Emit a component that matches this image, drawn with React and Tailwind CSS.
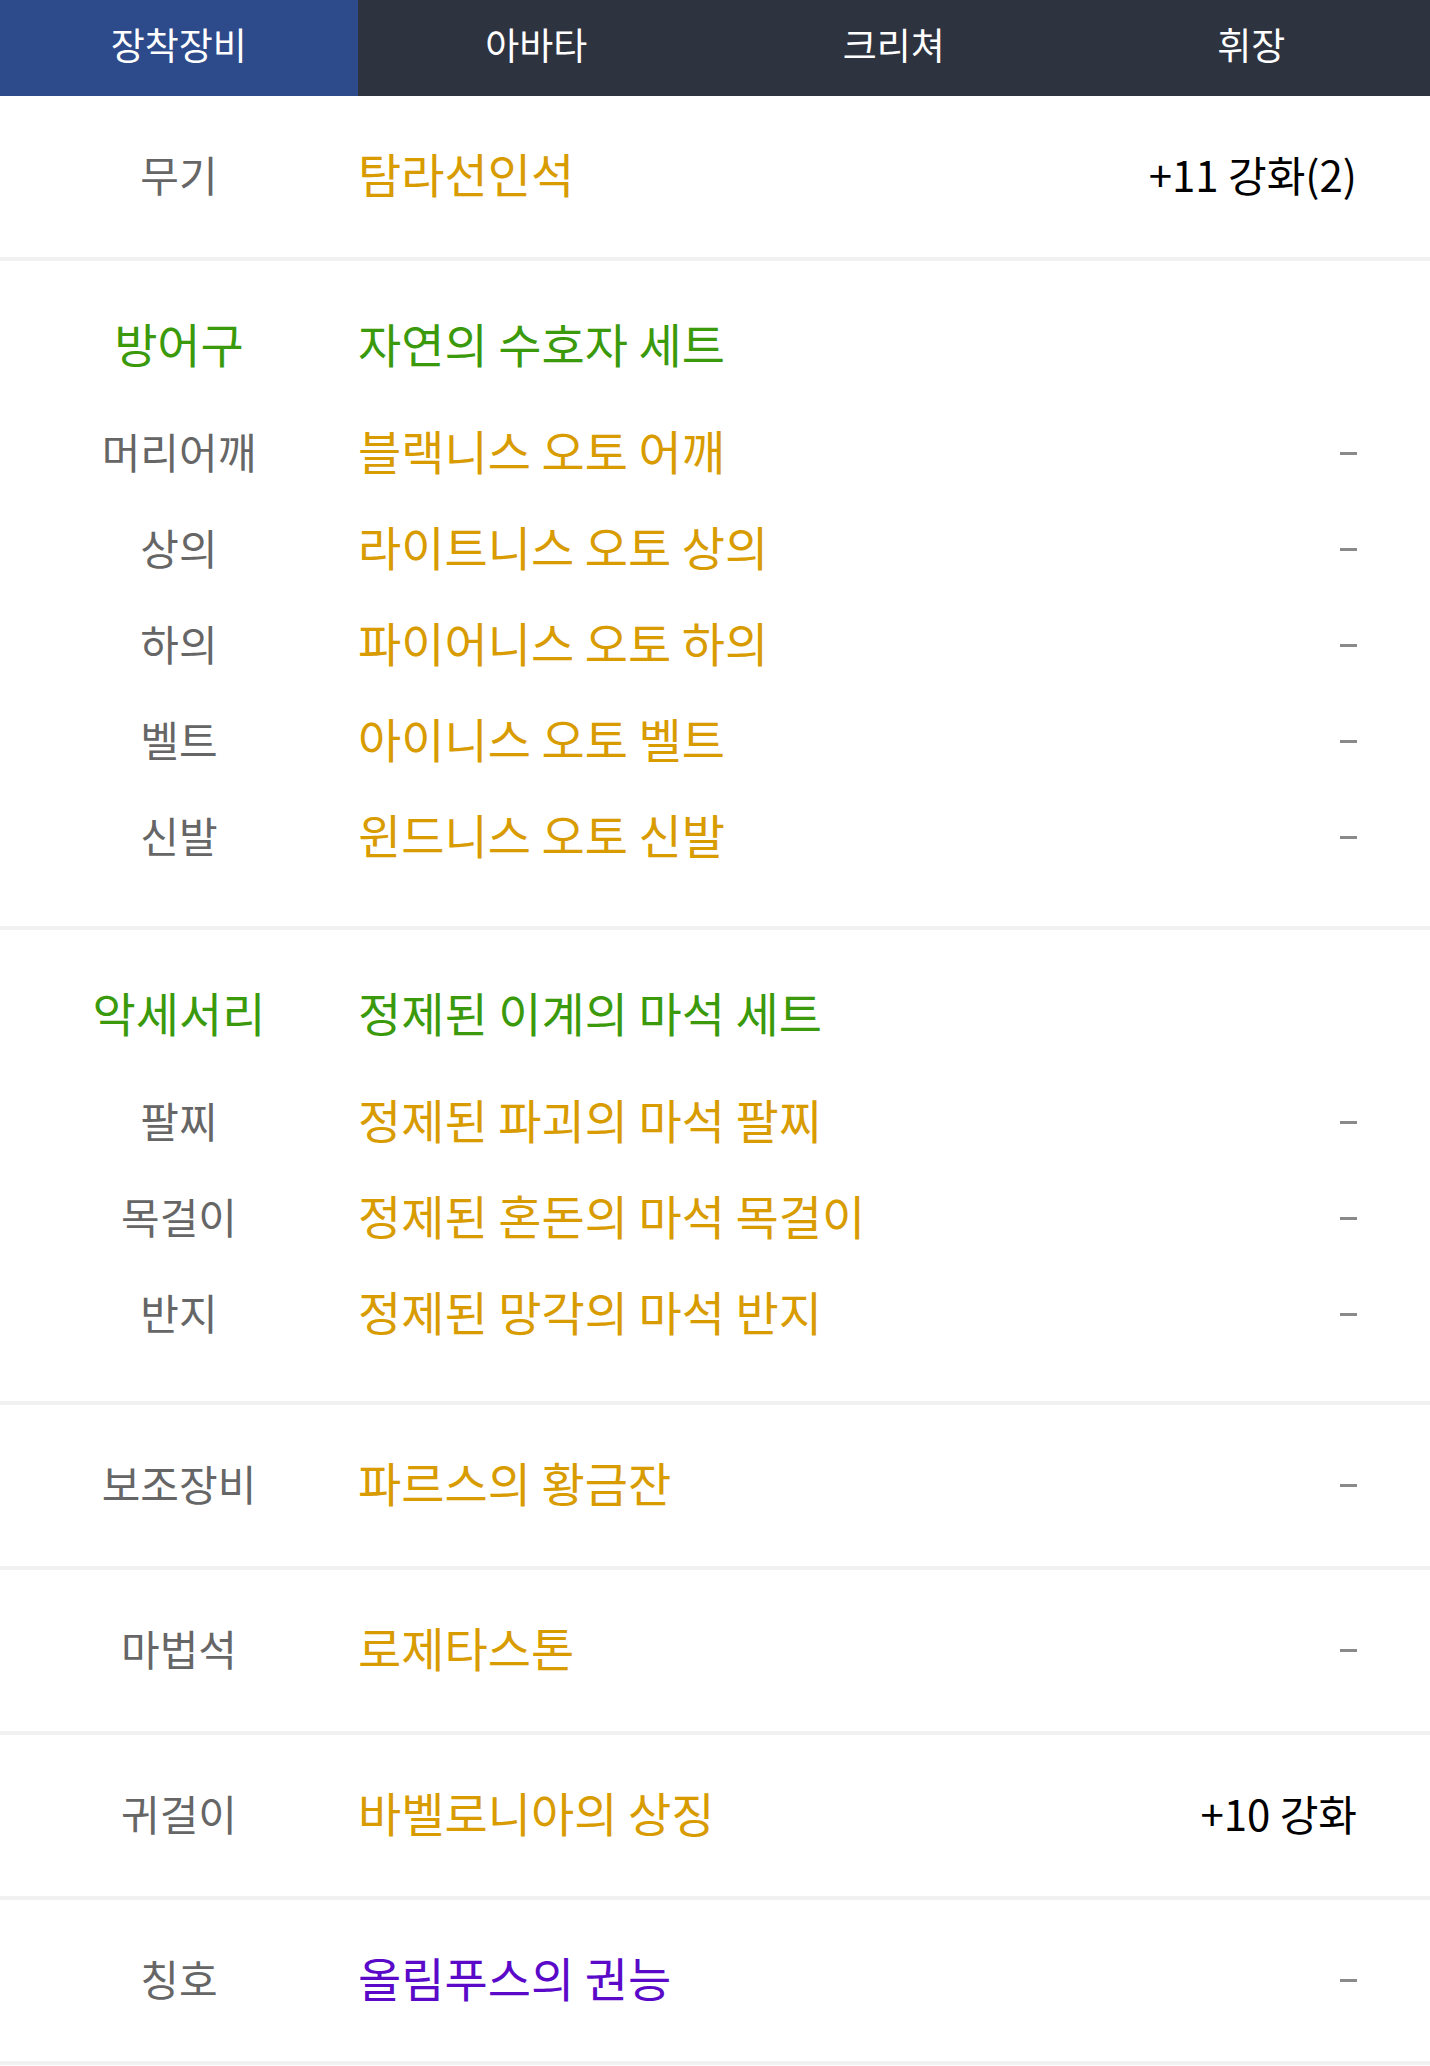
import React from 'react'

const tabs = ['장착장비', '아바타', '크리쳐', '휘장']

const sections = [
  { rows: [{ label: '무기', value: '탐라선인석', extra: '+11 강화(2)' }] },
  {
    title: { label: '방어구', value: '자연의 수호자 세트' },
    pb: 'pb-[44px]',
    rows: [
      { label: '머리어깨', value: '블랙니스 오토 어깨' },
      { label: '상의', value: '라이트니스 오토 상의' },
      { label: '하의', value: '파이어니스 오토 하의' },
      { label: '벨트', value: '아이니스 오토 벨트' },
      { label: '신발', value: '윈드니스 오토 신발' },
    ],
  },
  {
    title: { label: '악세서리', value: '정제된 이계의 마석 세트' },
    pb: 'pb-[42px]',
    rows: [
      { label: '팔찌', value: '정제된 파괴의 마석 팔찌' },
      { label: '목걸이', value: '정제된 혼돈의 마석 목걸이' },
      { label: '반지', value: '정제된 망각의 마석 반지' },
    ],
  },
  { rows: [{ label: '보조장비', value: '파르스의 황금잔' }] },
  { rows: [{ label: '마법석', value: '로제타스톤' }] },
  { rows: [{ label: '귀걸이', value: '바벨로니아의 상징', extra: '+10 강화' }] },
  { rows: [{ label: '칭호', value: '올림푸스의 권능', purple: true }] },
]

const Row = ({ label, value, extra, purple }) => (
  <div className="flex items-center h-[96px]">
    <div className="w-[358px] shrink-0 text-center text-[42px] text-[#666666]">{label}</div>
    <div className={`flex-1 text-[47px] ${purple ? 'text-[#5b09c9]' : 'text-[#d89b00]'}`}>{value}</div>
    {extra ? (
      <div className="text-[42px] text-black">{extra}</div>
    ) : (
      <div className="w-[17px] h-[3px] bg-[#8a8a8a] mt-[6px]" />
    )}
  </div>
)

export default function App() {
  return (
    <div className="w-[1430px] bg-white" style={{ fontFamily: '"Noto Sans CJK KR", "Noto Sans", sans-serif' }}>
      <div className="flex h-[96px] bg-[#2e3340]">
        {tabs.map((t, i) => (
          <div
            key={t}
            className={`flex-1 flex items-center justify-center pb-[6px] text-[37px] text-white ${i === 0 ? 'bg-[#2d4a8b]' : ''}`}
          >
            {t}
          </div>
        ))}
      </div>
      {sections.map((s, i) =>
        s.title ? (
          <div key={i} className={`pt-[34px] ${s.pb} pr-[73px] border-b-4 border-[#f1f1f1]`}>
            <div className="flex items-center h-[96px] mb-[11px]">
              <div className="w-[358px] shrink-0 text-center text-[47px] text-[#3b9a0b]">{s.title.label}</div>
              <div className="flex-1 text-[47px] text-[#3b9a0b]">{s.title.value}</div>
            </div>
            {s.rows.map((r) => (
              <Row key={r.label} {...r} />
            ))}
          </div>
        ) : (
          <div key={i} className="h-[165px] flex flex-col justify-center pb-[6px] pr-[73px] border-b-4 border-[#f1f1f1]">
            <Row {...s.rows[0]} />
          </div>
        )
      )}
    </div>
  )
}
